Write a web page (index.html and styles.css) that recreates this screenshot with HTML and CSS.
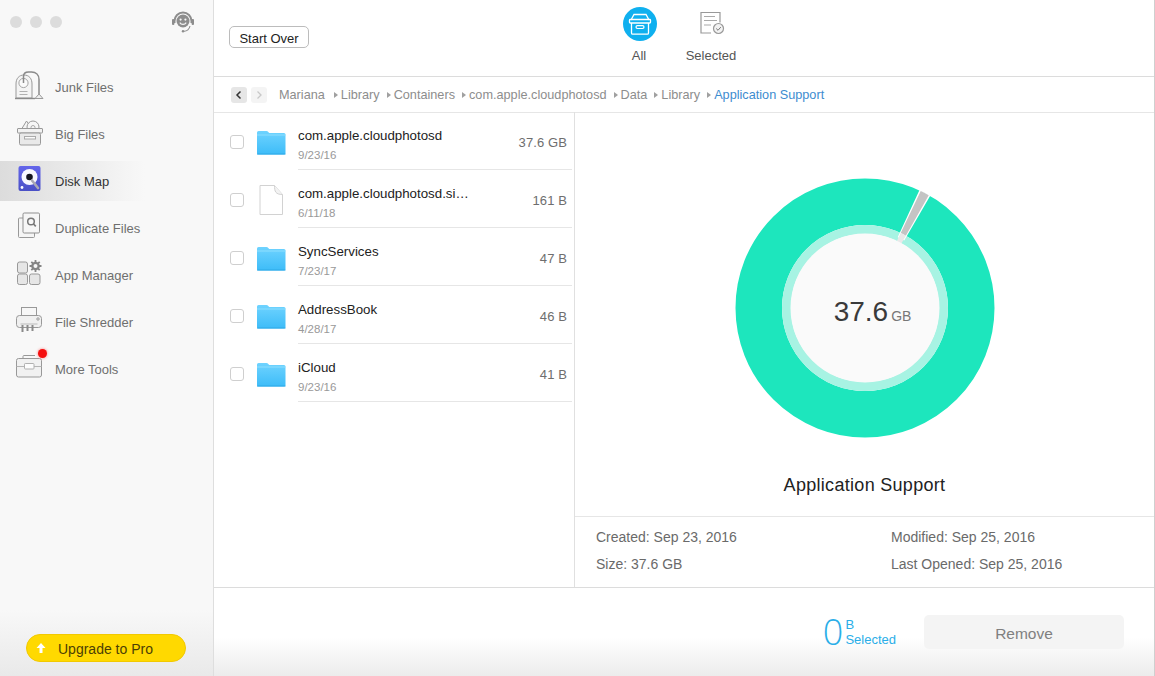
FILE: index.html
```html
<!DOCTYPE html>
<html lang="en">
<head>
<meta charset="utf-8">
<title>Disk Map</title>
<link rel="stylesheet" href="styles.css">
</head>
<body>
<div class="app">
  <aside class="sidebar">
    <div class="titlebar">
      <div class="lights"><i></i><i></i><i></i></div>
      <svg class="support" viewBox="0 0 24 24"><path d="M3.500 13V11a8.500 8.500 0 0 1 17 0v2" fill="none" stroke="#8d8d8d" stroke-width="2"/><circle cx="12" cy="11" r="6.500" fill="#8d8d8d"/><circle cx="9.600" cy="9.600" r="1.100" fill="#f8f8f8"/><circle cx="14.400" cy="9.600" r="1.100" fill="#f8f8f8"/><path d="M8.800 12.600c1.400 2.400 5 2.400 6.400 0" fill="none" stroke="#f8f8f8" stroke-width="1.100"/><rect x="1" y="9" width="2.400" height="6" rx="1" fill="#8d8d8d"/><rect x="20.600" y="9" width="2.400" height="6" rx="1" fill="#8d8d8d"/><path d="M19 16c-.8 3.500-3 5.200-6 5.200" fill="none" stroke="#8d8d8d" stroke-width="1.100"/><circle cx="12" cy="21.300" r="1.200" fill="#8d8d8d"/></svg>
    </div>
    <nav class="nav">
      <a class="nav-item">
        <svg class="nav-icon" viewBox="0 0 30 30"><path d="M2 26V12C2 6.500 5 3 10 3s8 3.500 8 9v14z" fill="#f4f4f4" stroke="#9a9a9a"/><path d="M1 26.500h20" stroke="#8a8a8a" stroke-width="1.400"/><circle cx="9.500" cy="11" r="4.600" fill="#fafafa" stroke="#a5a5a5"/><path d="M5.500 19.500h8M5.500 22.500h8" stroke="#b0b0b0"/><path d="M9.500 11V4.500C9.500 1.500 11.500 0 14.500 0h3C22 0 25 3 25 7.500V22" fill="none" stroke="#8a8a8a" stroke-width="1.500"/><path d="M21 26.500l4-4.500 4 4.500z" fill="#eee" stroke="#9a9a9a"/></svg>
        <span>Junk Files</span>
      </a>
      <a class="nav-item">
        <svg class="nav-icon" viewBox="0 0 30 30"><path d="M7 11l5.500-9 5 7" fill="#f5f5f5" stroke="#9a9a9a"/><circle cx="19" cy="8" r="6" fill="#f6f6f6" stroke="#9a9a9a"/><circle cx="19" cy="8.500" r="2" fill="none" stroke="#aaa"/><rect x="3.500" y="9.500" width="25" height="4.500" rx="0.500" fill="#f2f2f2" stroke="#999"/><rect x="5.500" y="14" width="21" height="12" rx="1.500" fill="#e9e9e9" stroke="#999"/><rect x="10.500" y="17.500" width="11" height="2.500" fill="#fafafa" stroke="#aaa"/></svg>
        <span>Big Files</span>
      </a>
      <a class="nav-item active">
        <svg class="nav-icon" viewBox="0 0 30 30"><defs><linearGradient id="dk" x1="0" y1="0" x2="0" y2="1"><stop offset="0" stop-color="#6365ea"/><stop offset="1" stop-color="#4a50c6"/></linearGradient></defs><rect x="4.500" y="0" width="22" height="25" rx="2" fill="url(#dk)"/><circle cx="15.500" cy="11" r="8" fill="#f8f8ff"/><circle cx="15.500" cy="11" r="3.300" fill="#15151f"/><path d="M18 14.500l6 7.500" stroke="#a9a9b4" stroke-width="2.600" stroke-linecap="round"/><circle cx="8" cy="21.500" r="1.400" fill="#fff"/></svg>
        <span>Disk Map</span>
      </a>
      <a class="nav-item">
        <svg class="nav-icon" viewBox="0 0 30 30"><path d="M9 5H5.500Q4.500 5 4.500 6v17.500q0 1 1 1h14q1 0 1-1V20" fill="#f5f5f5" stroke="#999"/><rect x="9" y="0" width="16.500" height="20" rx="1.200" fill="#f6f6f6" stroke="#8f8f8f"/><circle cx="17" cy="8.500" r="3.300" fill="none" stroke="#777" stroke-width="1.500"/><path d="M19.500 11l2.300 2.300" stroke="#777" stroke-width="1.700"/></svg>
        <span>Duplicate Files</span>
      </a>
      <a class="nav-item">
        <svg class="nav-icon" viewBox="0 0 30 30"><rect x="3.500" y="2" width="10" height="11" rx="2" fill="#e6e6e6" stroke="#999"/><rect x="3.500" y="14" width="10" height="10.500" rx="2" fill="#e6e6e6" stroke="#999"/><rect x="15.500" y="14" width="10.500" height="10.500" rx="2" fill="#e6e6e6" stroke="#999"/><path d="M21.500 0v12M15.500 6h12M17.300 1.800l8.400 8.400M25.700 1.800l-8.400 8.400" stroke="#858585" stroke-width="1.800"/><circle cx="21.500" cy="6" r="4.300" fill="#858585"/><circle cx="21.500" cy="6" r="2" fill="#f8f8f8"/></svg>
        <span>App Manager</span>
      </a>
      <a class="nav-item">
        <svg class="nav-icon" viewBox="0 0 30 30"><rect x="7.500" y="0.500" width="15" height="9" fill="#f7f7f7" stroke="#999"/><rect x="2.500" y="8.500" width="25" height="12" rx="3" fill="#f0f0f0" stroke="#999"/><circle cx="24" cy="12" r="1.200" fill="none" stroke="#999"/><path d="M6.500 17h17" stroke="#bbb"/><path d="M8.500 18v7M13.500 18v6M18.500 18v6" stroke="#8a8a8a" stroke-width="2"/></svg>
        <span>File Shredder</span>
      </a>
      <a class="nav-item">
        <svg class="nav-icon" viewBox="0 0 30 30"><rect x="2.500" y="4.500" width="25" height="18.500" rx="2" fill="#f1f1f1" stroke="#999"/><path d="M9 4.500V2.500q0-1 1-1h11" fill="none" stroke="#999"/><path d="M2.500 12.500h25" stroke="#b5b5b5"/><rect x="10.500" y="9.500" width="9.500" height="5.500" rx="0.800" fill="#fcfcfc" stroke="#b0b0b0"/></svg>
        <span>More Tools</span>
        <b class="badge"></b>
      </a>
    </nav>
    <button class="upgrade"><svg class="upgrade-arrow" viewBox="0 0 10 10"><path d="M5 0L.5 5H3.500v5h3V5h3z" fill="#fff"/></svg>Upgrade to Pro</button>
  </aside>

  <main class="main">
    <header class="topbar">
      <button class="start">Start Over</button>
      <div class="tabs">
        <div class="tab">
          <svg class="tab-icon" viewBox="-1 0 34 34"><circle cx="17" cy="17" r="17" fill="#0fb0ef"/><path d="M8 13l3-5.500h12l3 5.500" fill="none" stroke="#fff" stroke-width="1.300"/><rect x="6.500" y="12.500" width="21" height="3.500" rx="0.800" fill="none" stroke="#fff" stroke-width="1.300"/><path d="M8.500 16v10q0 1.200 1.200 1.200h14.600q1.200 0 1.200-1.200V16" fill="none" stroke="#fff" stroke-width="1.300"/><rect x="13" y="18.700" width="8" height="2.800" rx="1.400" fill="none" stroke="#fff" stroke-width="1.200"/></svg>
          <span>All</span>
        </div>
        <div class="tab">
          <svg class="tab-icon" viewBox="0 0 34 34"><path d="M17 26H7V5.500h19v10" fill="none" stroke="#999" stroke-width="1.200"/><path d="M10 9.500h11M10 13.500h13M10 18h7" stroke="#aaa" stroke-width="1.200"/><circle cx="24.500" cy="21.500" r="5" fill="#f2f2f2" stroke="#999" stroke-width="1.200"/><path d="M22.200 21.500l1.800 1.800 2.800-3.200" fill="none" stroke="#777"/></svg>
          <span>Selected</span>
        </div>
      </div>
    </header>

    <div class="crumbs">
      <span class="arrow-btn on"><svg viewBox="0 0 16 16"><path d="M9.500 4.500L6 8l3.500 3.500" fill="none" stroke="#333" stroke-width="1.500"/></svg></span>
      <span class="arrow-btn"><svg viewBox="0 0 16 16"><path d="M6.500 4.500L10 8l-3.500 3.500" fill="none" stroke="#c8c8c8" stroke-width="1.300"/></svg></span>
      <ol class="path">
        <li class="root">Mariana</li>
        <li>Library</li>
        <li>Containers</li>
        <li>com.apple.cloudphotosd</li>
        <li>Data</li>
        <li>Library</li>
        <li class="current">Application Support</li>
      </ol>
    </div>

    <section class="content">
      <ul class="list">
        <li class="row">
          <span class="check"></span>
          <svg class="file-icon" viewBox="0 0 30 30"><use href="#folder"/></svg>
          <div class="row-body"><div class="names"><div class="name">com.apple.cloudphotosd</div><div class="date">9/23/16</div></div><div class="size">37.6 GB</div></div>
        </li>
        <li class="row">
          <span class="check"></span>
          <svg class="file-icon" viewBox="0 0 30 30"><path d="M4 0.500h14.500l8 9v20H4z" fill="#fff" stroke="#d2d2d2"/><path d="M18.500 0.500c0 6 1 9 8 9" fill="#f3f3f3" stroke="#d2d2d2"/></svg>
          <div class="row-body"><div class="names"><div class="name">com.apple.cloudphotosd.si…</div><div class="date">6/11/18</div></div><div class="size">161 B</div></div>
        </li>
        <li class="row">
          <span class="check"></span>
          <svg class="file-icon" viewBox="0 0 30 30"><use href="#folder"/></svg>
          <div class="row-body"><div class="names"><div class="name">SyncServices</div><div class="date">7/23/17</div></div><div class="size">47 B</div></div>
        </li>
        <li class="row">
          <span class="check"></span>
          <svg class="file-icon" viewBox="0 0 30 30"><use href="#folder"/></svg>
          <div class="row-body"><div class="names"><div class="name">AddressBook</div><div class="date">4/28/17</div></div><div class="size">46 B</div></div>
        </li>
        <li class="row">
          <span class="check"></span>
          <svg class="file-icon" viewBox="0 0 30 30"><use href="#folder"/></svg>
          <div class="row-body"><div class="names"><div class="name">iCloud</div><div class="date">9/23/16</div></div><div class="size">41 B</div></div>
        </li>
      </ul>

      <div class="detail">
        <div class="chart">
          <svg class="donut" viewBox="0 0 260 260">
            <g transform="rotate(-90 130 130)" fill="none">
              <circle cx="130" cy="130" r="106.250" stroke="#1de6bd" stroke-width="46.500"/>
              <circle cx="130" cy="130" r="78.500" stroke="#a7f3e3" stroke-width="9"/>
              <circle cx="130" cy="130" r="104" stroke="#fff" stroke-width="52" pathLength="360" stroke-dasharray="5.400 354.600" stroke-dashoffset="-24.800"/>
              <circle cx="130" cy="130" r="106.250" stroke="#c4c4c4" stroke-width="46.500" pathLength="360" stroke-dasharray="4 356" stroke-dashoffset="-25.500"/>
              <circle cx="130" cy="130" r="78.500" stroke="#e9e9e9" stroke-width="9" pathLength="360" stroke-dasharray="4 356" stroke-dashoffset="-25.500"/>
            </g>
            <circle cx="130" cy="130" r="74.500" fill="#fafafa"/>
          </svg>
          <div class="total"><span class="num">37.6</span><span class="unit">GB</span></div>
        </div>
        <h2 class="title">Application Support</h2>
        <dl class="info">
          <div>Created: Sep 23, 2016</div>
          <div>Modified: Sep 25, 2016</div>
          <div>Size: 37.6 GB</div>
          <div>Last Opened: Sep 25, 2016</div>
        </dl>
      </div>
    </section>

    <footer class="footer">
      <div class="selected"><span class="zero">0</span><div class="sel-text"><span>B</span><span>Selected</span></div></div>
      <button class="remove">Remove</button>
    </footer>
  </main>
</div>
<svg class="defs" width="0" height="0"><defs><linearGradient id="fg" x1="0" y1="0" x2="0" y2="1"><stop offset="0" stop-color="#6fd3ff"/><stop offset="1" stop-color="#3dbcf8"/></linearGradient><g id="folder"><path d="M1 5.500q0-1.500 1.500-1.500h8q1 0 2 1.200l.8.800H28q1.500 0 1.500 1.500V26q0 1.500-1.500 1.500H2.500Q1 27.500 1 26z" fill="url(#fg)"/><path d="M1 7.500h28.500v1H1z" fill="#8fdeff"/><path d="M1 26.500h28.500v1H1z" fill="#2fa9e6"/></g></defs></svg>
</body>
</html>
```
FILE: styles.css
```css
* { box-sizing: border-box; }
html, body { margin: 0; padding: 0; height: 100%; }
body { font-family: "Liberation Sans", Arial, sans-serif; color: #222; background: #fff; overflow: hidden; }
ul, ol, dl { margin: 0; padding: 0; list-style: none; }
button { font-family: inherit; }
.defs { position: absolute; }

.app { display: flex; width: 1155px; height: 676px; }

.sidebar { width: 214px; flex: none; display: flex; flex-direction: column; border-right: 1px solid #dedede; background: linear-gradient(#f8f8f8 0, #f8f8f8 610px, #e9e9e9 676px); }
.titlebar { height: 67px; flex: none; display: flex; justify-content: space-between; padding: 10px 18px 0 10px; }
.lights { display: flex; gap: 8px; padding-top: 6px; }
.lights i { display: block; width: 12px; height: 12px; border-radius: 50%; background: #dcdcdc; }
.support { width: 24px; height: 24px; }

.nav { display: flex; flex-direction: column; gap: 7px; }
.nav-item { position: relative; display: flex; align-items: center; height: 40px; padding-left: 14px; font-size: 13px; color: #6f6f6f; }
.nav-item span { margin-left: 11px; }
.nav-item.active { color: #333; background: linear-gradient(90deg, #dcdcdc 0, #f8f8f8 145px); }
.nav-icon { width: 30px; height: 30px; flex: none; overflow: visible; }
.badge { position: absolute; left: 38px; top: 0; width: 9px; height: 9px; border-radius: 50%; background: #f50d0d; box-shadow: 0 0 3px #f77; }

.upgrade { display: flex; align-items: center; margin: auto 0 14px 26px; width: 160px; height: 28px; padding: 1px 0 0 9px; border: 1px solid #f2c900; border-radius: 14px; background: #ffd900; font-size: 14px; color: #4b3f05; }
.upgrade-arrow { width: 10px; height: 10px; margin-right: 12px; margin-top: -1px; }

.main { flex: 1; display: flex; flex-direction: column; min-width: 0; border-right: 1px solid #cfcfcf; }

.topbar { position: relative; height: 77px; flex: none; border-bottom: 1px solid #dcdcdc; display: flex; align-items: flex-start; padding: 26px 0 0 15px; }
.start { width: 80px; height: 22px; padding: 2px 0 0; background: #fff; border: 1px solid #bcbcbc; border-radius: 5px; font-size: 13px; color: #222; }
.tabs { position: absolute; left: 393px; top: 7px; display: flex; gap: 8px; }
.tab { width: 64px; display: flex; flex-direction: column; align-items: center; font-size: 13px; color: #555; }
.tab-icon { width: 34px; height: 34px; margin-bottom: 7px; overflow: visible; }

.crumbs { height: 36px; flex: none; display: flex; align-items: center; padding-left: 17px; gap: 4px; border-bottom: 1px solid #e6e6e6; }
.arrow-btn { width: 16px; height: 16px; border-radius: 3px; background: #f4f4f4; display: block; }
.arrow-btn svg { display: block; width: 16px; height: 16px; }
.arrow-btn.on { background: #e6e6e6; }
.path { display: flex; margin-left: 8px; font-size: 12.700px; color: #8d8d8d; }
.path li { display: flex; align-items: center; margin-right: 7px; white-space: nowrap; }
.path li::before { content: ""; width: 0; height: 0; margin-right: 3px; border-left: 4px solid #a0a0a0; border-top: 3px solid transparent; border-bottom: 3px solid transparent; }
.path li.root { margin-right: 9px; }
.path li.root::before { display: none; }
.path li.current { color: #3d8ccf; }

.content { flex: 1; display: flex; min-height: 0; border-bottom: 1px solid #dcdcdc; }
.list { width: 361px; flex: none; margin-top: -1px; border-right: 1px solid #e0e0e0; }
.row { display: flex; align-items: center; height: 58px; padding: 2px 0 0 16px; }
.check { width: 14px; height: 14px; flex: none; border: 1px solid #cfcfcf; border-radius: 3px; background: #fff; }
.file-icon { width: 30px; height: 30px; flex: none; margin: 0 12px; }
.row-body { flex: 1; align-self: stretch; display: flex; align-items: center; margin-right: 2px; padding-right: 5px; border-bottom: 1px solid #e6e6e6; min-width: 0; }
.names { flex: 1; min-width: 0; padding-top: 3px; }
.name { font-size: 13.300px; line-height: 16px; color: #222; margin-top: 3px; white-space: nowrap; }
.date { font-size: 11.500px; line-height: 12px; margin-top: 5px; color: #999; }
.size { font-size: 13px; color: #6e6e6e; white-space: nowrap; letter-spacing: 0.1px; padding-top: 2px; }

.detail { flex: 1; display: flex; flex-direction: column; min-width: 0; }
.chart { position: relative; width: 260px; height: 260px; margin: 65px 0 0 159.500px; flex: none; }
.donut { display: block; width: 260px; height: 260px; }
.total { position: absolute; inset: 0; display: flex; align-items: center; justify-content: center; gap: 3px; padding: 8px 0 0 16px; }
.num { font-size: 28px; color: #3a3a3a; }
.unit { font-size: 14px; color: #777; padding-top: 8px; }
.title { margin: 36px 0 0; height: 42px; font-size: 18px; line-height: 22px; letter-spacing: 0.3px; font-weight: 400; color: #222; text-align: center; }
.info { flex: 1; display: grid; grid-template-columns: 295px 1fr; align-content: start; padding: 12px 0 0 21px; row-gap: 11px; border-top: 1px solid #e6e6e6; font-size: 14px; line-height: 16px; color: #6a6a6a; }

.footer { flex: none; height: 88px; display: flex; align-items: flex-start; justify-content: flex-end; padding: 27px 30px 0 0; background: linear-gradient(#fff 0, #fff 50px, #ececec 88px); }
.selected { display: flex; color: #2aaee8; margin-right: 28px; height: 34px; }
.zero { font-family: "Open Sans", "Liberation Sans", sans-serif; font-weight: 300; font-size: 36px; line-height: 34px; margin-right: 2px; }
.sel-text { display: flex; flex-direction: column; font-size: 13px; line-height: 15px; padding-top: 2px; }
.remove { width: 200px; height: 34px; padding: 4px 0 0; border: 0; border-radius: 5px; background: #f4f4f4; font-size: 15.500px; color: #808080; }
```
